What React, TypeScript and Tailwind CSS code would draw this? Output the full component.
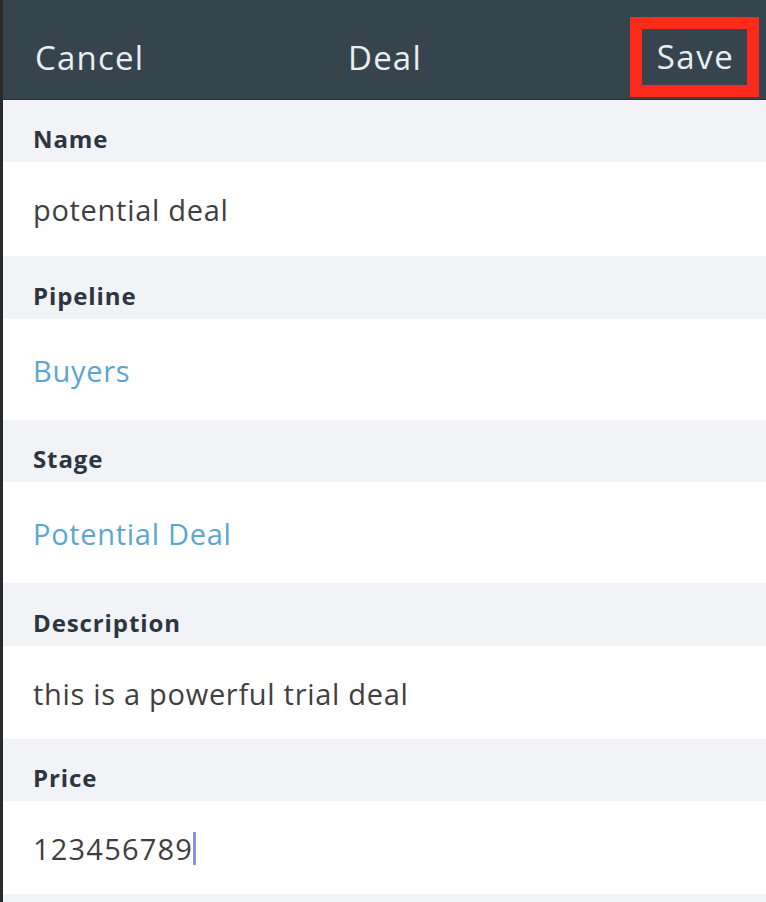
import React from "react";

const font = { fontFamily: '"Open Sans", "Liberation Sans", sans-serif' };

function Label({ text, h }: { text: string; h: string }) {
  return (
    <div className={`flex items-center bg-[#f1f3f7] pl-[30px] pt-[16px] ${h}`}>
      <span className="text-[24px] font-bold text-[#2c3540] tracking-[0.9px]">{text}</span>
    </div>
  );
}

function Value({ children, h, blue }: { children: React.ReactNode; h: string; blue?: boolean }) {
  return (
    <div
      className={`flex items-center bg-white pl-[30px] pt-[2px] text-[29px] tracking-[0.7px] ${h} ${
        blue ? "text-[#5ba6d1]" : "text-[#3f3f3f]"
      }`}
    >
      {children}
    </div>
  );
}

export default function App() {
  return (
    <div className="w-[766px] h-[902px] overflow-hidden bg-[#f1f3f7] flex" style={font}>
      <div className="w-[3px] bg-[#2a2a2a] shrink-0" />
      <div className="flex-1 flex flex-col">
        <div className="h-[100px] bg-[#36444d] border-b border-[#26323a] flex items-center pt-[16px] text-[#e8eef2] text-[33px] tracking-[1.2px] relative">
          <span className="pl-[32px] w-[345px]">Cancel</span>
          <span className="">Deal</span>
          <div className="absolute left-[627px] top-[17px] w-[129px] h-[80px] border-[12px] border-[#fb2a1a] flex items-center justify-center">
            <span className="text-[33px] text-[#e8eef2] tracking-[1.5px] pl-[2px]">Save</span>
          </div>
        </div>
        <Label text="Name" h="h-[62px]" />
        <Value h="h-[94px]">potential deal</Value>
        <Label text="Pipeline" h="h-[63px]" />
        <Value h="h-[101px]" blue>
          Buyers
        </Value>
        <Label text="Stage" h="h-[62px]" />
        <Value h="h-[101px]" blue>
          Potential Deal
        </Value>
        <Label text="Description" h="h-[63px]" />
        <Value h="h-[93px]">this is a powerful trial deal</Value>
        <Label text="Price" h="h-[62px]" />
        <Value h="h-[93px]">
          <span className="tracking-[1.2px]">123456789</span>
          <span className="inline-block w-[3px] h-[33px] bg-[#8b91e6] ml-[0px]" />
        </Value>
      </div>
    </div>
  );
}
